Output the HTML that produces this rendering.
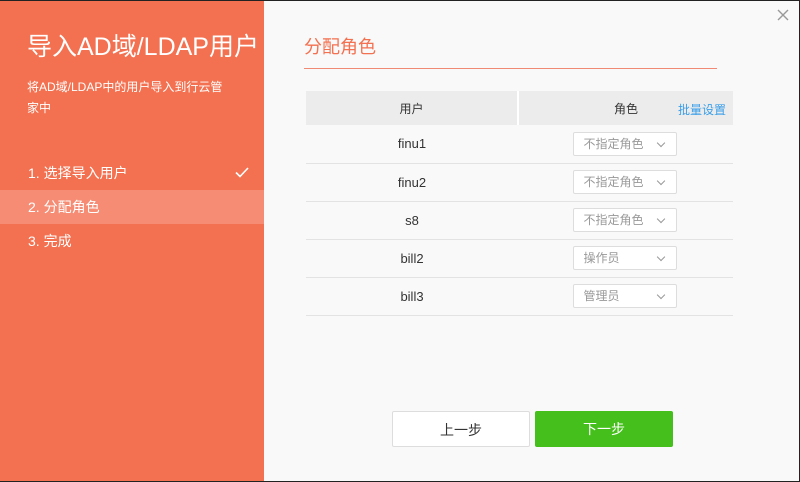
<!DOCTYPE html>
<html><head><meta charset="utf-8"><style>
*{margin:0;padding:0;box-sizing:border-box}
body{width:800px;height:482px;overflow:hidden;font-family:"Liberation Sans","Noto Sans CJK SC",sans-serif;background:#f9f9f9;position:relative}
.frame{position:absolute;left:0;top:0;width:800px;height:482px;border:1px solid #222;border-left:none;pointer-events:none;z-index:5}
.left{position:absolute;left:0;top:0;width:264px;height:482px;background:#f37150;color:#fff}
.t1{position:absolute;left:27px;top:27px;font-size:25px;white-space:nowrap}
.t2{position:absolute;left:27px;top:77px;font-size:12px;line-height:21px;width:204px}
.step{position:absolute;left:0;width:264px;height:34px;line-height:34px;padding-left:28px;font-size:14px}
.step.on{background:#f68c73}
.check{position:absolute;left:235px;top:11px}
.title{position:absolute;left:304px;top:33px;font-size:18px;color:#f37150}
.line{position:absolute;left:304px;top:68px;width:413px;height:1px;background:#f08a75}
.close{position:absolute;left:777px;top:9px}
table{position:absolute;left:306px;top:91px;width:427px;border-collapse:collapse;font-size:13px;color:#333}
th{background:#ececec;height:34px;font-weight:normal;font-size:12px}
td{height:38px;border-bottom:1px solid #e3e3e3;text-align:center}
.sel{display:inline-block;width:104px;height:24px;border:1px solid #ddd;background:#fff;border-radius:2px;text-align:left;padding-left:10px;line-height:22px;font-size:12px;color:#999;position:relative;margin-left:-2px}
.sel:after{content:"";position:absolute;right:12px;top:7px;width:5px;height:5px;border-right:1px solid #999;border-bottom:1px solid #999;transform:rotate(45deg)}
.btn{position:absolute;top:411px;width:138px;height:36px;line-height:36px;text-align:center;font-size:14px;border-radius:2px}
</style></head><body>
<div class="frame"></div>
<div class="left">
<div class="t1">导入AD域/LDAP用户</div>
<div class="t2">将AD域/LDAP中的用户导入到行云管<br>家中</div>
<div class="step" style="top:156px">1. 选择导入用户<svg class="check" width="14" height="11" viewBox="0 0 14 11"><path d="M1 5.5L5 9.5L13 1" fill="none" stroke="#fff" stroke-width="1.6"/></svg></div>
<div class="step on" style="top:190px">2. 分配角色</div>
<div class="step" style="top:224px">3. 完成</div>
</div>
<div class="title">分配角色</div>
<div class="line"></div>
<svg class="close" width="12" height="12" viewBox="0 0 12 12"><path d="M1 1L11 11M11 1L1 11" stroke="#999" stroke-width="1.4"/></svg>
<table>
<tr><th style="width:212px;border-right:2px solid #fff">用户</th><th style="position:relative">角色<span style="position:absolute;right:7px;top:10px;color:#3a9ee8">批量设置</span></th></tr>
<tr><td>finu1</td><td><span class="sel">不指定角色</span></td></tr>
<tr><td>finu2</td><td><span class="sel">不指定角色</span></td></tr>
<tr><td>s8</td><td><span class="sel">不指定角色</span></td></tr>
<tr><td>bill2</td><td><span class="sel">操作员</span></td></tr>
<tr><td>bill3</td><td><span class="sel">管理员</span></td></tr>
</table>
<div class="btn" style="left:392px;background:#fff;border:1px solid #ddd;color:#333">上一步</div>
<div class="btn" style="left:535px;background:#45bf1b;color:#fff">下一步</div>
</body></html>
